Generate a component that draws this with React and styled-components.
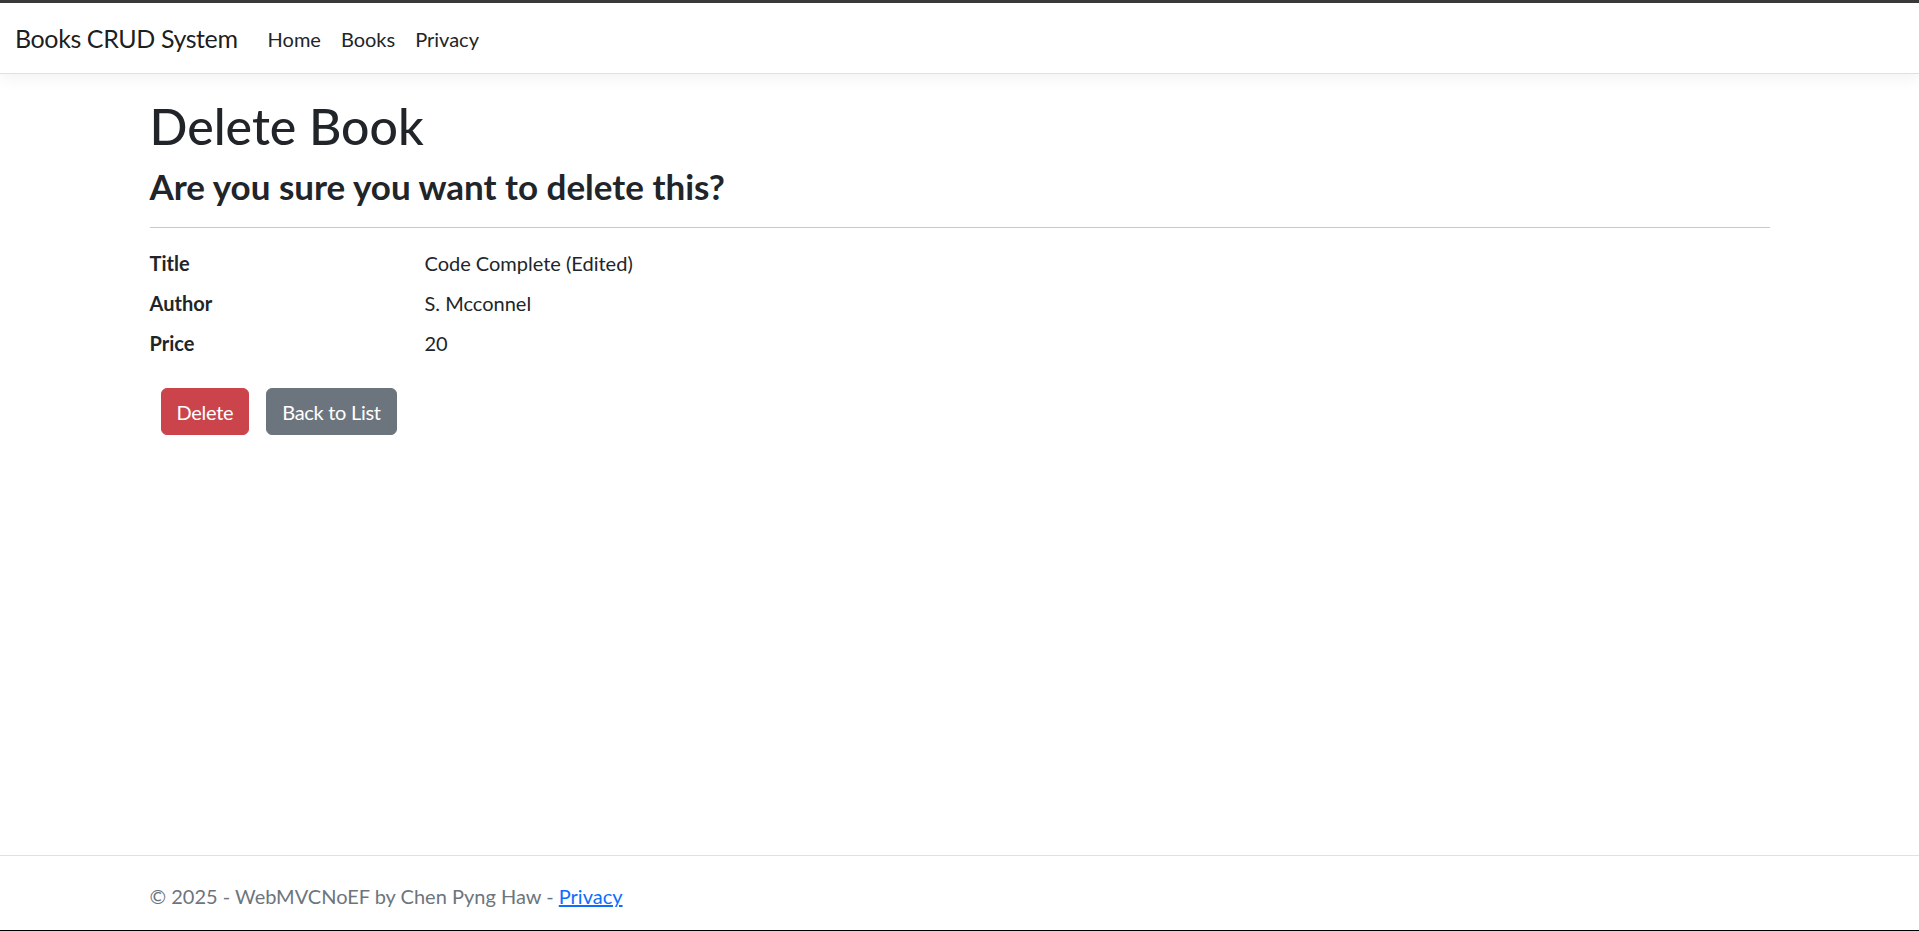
import React from 'react';
import styled, { createGlobalStyle } from 'styled-components';

const GlobalStyle = createGlobalStyle`
  html, body {
    margin: 0;
    padding: 0;
    height: 100%;
  }
  body {
    font-family: Lato, "Noto Sans", "Liberation Sans", sans-serif;
    font-size: 20px;
    line-height: 1.5;
    color: #212529;
    background: #ffffff;
  }
  #root {
    height: 100%;
  }
  * {
    box-sizing: border-box;
  }
`;

const book = {
  title: 'Code Complete (Edited)',
  author: 'S. Mcconnel',
  price: 20,
};

function App() {
  return (
    <Page>
      <GlobalStyle />
      <Header>
        <Brand href="#">Books CRUD System</Brand>
        <NavList>
          <NavItem>
            <NavLink href="#">Home</NavLink>
          </NavItem>
          <NavItem>
            <NavLink href="#">Books</NavLink>
          </NavItem>
          <NavItem>
            <NavLink href="#">Privacy</NavLink>
          </NavItem>
        </NavList>
      </Header>

      <Main>
        <Container>
          <Title>Delete Book</Title>
          <SubTitle>Are you sure you want to delete this?</SubTitle>
          <Divider />
          <Details>
            <dt>Title</dt>
            <dd>{book.title}</dd>
            <dt>Author</dt>
            <dd>{book.author}</dd>
            <dt>Price</dt>
            <dd>{book.price}</dd>
          </Details>
          <Actions>
            <Button type="button" variant="danger">Delete</Button>
            <Button as="a" href="#" variant="secondary">Back to List</Button>
          </Actions>
        </Container>
      </Main>

      <Footer>
        <Container>
          &copy; 2025 - WebMVCNoEF by Chen Pyng Haw - <FooterLink href="#">Privacy</FooterLink>
        </Container>
      </Footer>
    </Page>
  );
}

const Page = styled.div`
  display: flex;
  flex-direction: column;
  height: 100%;
  border-top: 3px solid #3a3a3a;
  border-bottom: 1px solid #000000;
`;

const Header = styled.nav`
  display: flex;
  align-items: center;
  padding: 11px 15px 9px;
  background: #ffffff;
  border-bottom: 1px solid #dee2e6;
  box-shadow: 0 5px 15px rgba(0, 0, 0, 0.05);
  position: relative;
  z-index: 1;
`;

const Brand = styled.a`
  font-size: 25px;
  line-height: 37.5px;
  padding: 6.25px 0;
  margin-right: 20px;
  letter-spacing: -0.4px;
  color: rgba(0, 0, 0, 0.9);
  text-decoration: none;
  white-space: nowrap;
`;

const NavList = styled.ul`
  display: flex;
  list-style: none;
  margin: 0;
  padding: 0;
`;

const NavItem = styled.li`
  display: block;
`;

const NavLink = styled.a`
  display: block;
  padding: 10px 10px;
  color: #212529;
  text-decoration: none;
`;

const Main = styled.main`
  flex: 1;
  padding-top: 22px;
`;

const Container = styled.div`
  max-width: 1650px;
  margin: 0 auto;
  padding: 0 15px;
`;

const Title = styled.h1`
  font-size: 50px;
  font-weight: 500;
  line-height: 1.2;
  margin: 0 0 9px;
`;

const SubTitle = styled.h3`
  font-size: 35px;
  font-weight: 700;
  line-height: 1.2;
  margin: 0 0 20px;
`;

const Divider = styled.hr`
  margin: 0 0 20px;
  border: 0;
  border-top: 1px solid #212529;
  opacity: 0.25;
`;

const Details = styled.dl`
  display: grid;
  grid-template-columns: calc((100% + 30px) / 6) 1fr;
  margin: 0 0 20px;

  dt {
    font-weight: 700;
  }

  dd {
    margin: 0 0 10px;
  }
`;

const Actions = styled.div`
  display: flex;
  gap: 17px;
  padding-left: 11px;
`;

const Button = styled.button`
  display: inline-block;
  font-family: inherit;
  font-size: 20px;
  line-height: 1.5;
  letter-spacing: -0.3px;
  padding: 7.5px 15px;
  border: 1px solid ${(p) => (p.variant === 'danger' ? '#cc444b' : '#6c757d')};
  border-radius: 6px;
  background: ${(p) => (p.variant === 'danger' ? '#cc444b' : '#6c757d')};
  color: #ffffff;
  text-decoration: none;
  cursor: pointer;
`;

const Footer = styled.footer`
  border-top: 1px solid #dee2e6;
  line-height: 74px;
  padding-top: 3px;
  height: 75px;
  white-space: nowrap;
  color: #6c757d;
  overflow: hidden;
`;

const FooterLink = styled.a`
  color: #0d6efd;
  text-decoration: underline;
`;

export default App;
